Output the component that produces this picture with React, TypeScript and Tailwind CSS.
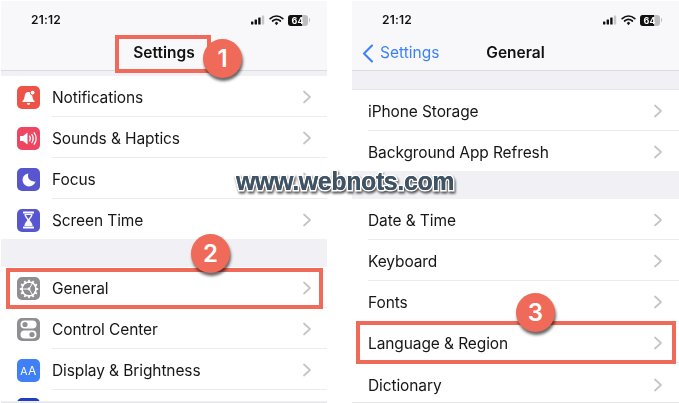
import React from "react";

function Chevron() {
  return (
    <svg width="10" height="14" viewBox="0 0 10 14" className="shrink-0">
      <path d="M2 1.5 L8 7 L2 12.5" fill="none" stroke="#c4c4c7" strokeWidth="1.7" strokeLinecap="round" strokeLinejoin="round" />
    </svg>
  );
}

function StatusBar({ pad }: { pad: string }) {
  return (
    <div className={`flex items-center justify-between h-[36px] pt-[2px] ${pad}`}>
      <span className="text-[12px] font-semibold text-[#111] tracking-[0.2px]">21:12</span>
      <div className="flex items-center gap-[4px]">
        <svg width="14" height="10" viewBox="0 0 14 10">
          <rect x="0" y="6.5" width="2.4" height="3" rx=".5" fill="#111" />
          <rect x="3.6" y="4.5" width="2.4" height="5" rx=".5" fill="#111" />
          <rect x="7.2" y="2.5" width="2.4" height="7" rx=".5" fill="#111" />
          <rect x="10.8" y="0.5" width="2.4" height="9" rx=".5" fill="#c8c8c8" />
        </svg>
        <svg width="15" height="11" viewBox="0 0 15 11">
          <path d="M1.2 3.6 C5 .3 10 .3 13.8 3.6" fill="none" stroke="#111" strokeWidth="1.7" strokeLinecap="round" />
          <path d="M3.6 6 C6 4 9 4 11.4 6" fill="none" stroke="#111" strokeWidth="1.7" strokeLinecap="round" />
          <path d="M5.7 8.1 L7.5 6.8 L9.3 8.1 L7.5 10.2 Z" fill="#111" />
        </svg>
        <div className="flex items-center">
          <div className="relative w-[20px] h-[11px] rounded-[3px] bg-[#bdbdbd] overflow-hidden">
            <div className="w-[14px] h-[11px] bg-[#111]" />
            <span className="absolute inset-0 flex items-center justify-center text-[9px] font-bold leading-none text-white">64</span>
          </div>
          <div className="w-[1.5px] h-[4px] ml-[1px] bg-[#bdbdbd] rounded-r-sm" />
        </div>
      </div>
    </div>
  );
}

function IconBox({ bg, children }: { bg: string; children?: React.ReactNode }) {
  return (
    <div className={`w-[23px] h-[23px] rounded-[5px] flex items-center justify-center shrink-0 ${bg}`}>{children}</div>
  );
}

function Row({ label, icon, last, h = "h-[41px]", pr = "pr-[16px]" }: { label: string; icon?: React.ReactNode; last?: boolean; h?: string; pr?: string }) {
  return (
    <div className={`flex items-center shrink-0 ${h} bg-white pl-[16px] pt-[2px]`}>
      {icon && <div className="mr-[12px]">{icon}</div>}
      <div className={`flex-1 flex items-center justify-between self-stretch ${pr} ${last ? "" : "border-b border-[#ececee]"}`}>
        <span className="text-[15.5px] text-[#161616] tracking-[-0.1px] pt-[2px]">{label}</span>
        <Chevron />
      </div>
    </div>
  );
}

const Bell = (
  <svg width="17" height="17" viewBox="0 0 17 17">
    <path d="M8.5 3 C5.8 3 4.8 5 4.6 7.5 C4.4 9.8 3.6 11 2.4 12.2 L2.4 13 L14.6 13 L14.6 12.2 C13.4 11 12.6 9.8 12.4 7.5 C12.2 5 11.2 3 8.5 3 Z" fill="#fff" />
    <circle cx="12.6" cy="3.6" r="2.4" fill="#fff" stroke="#ee5347" strokeWidth="1" />
    <path d="M6.8 14 H10.2 C10 15.3 9.3 15.8 8.5 15.8 C7.7 15.8 7 15.3 6.8 14 Z" fill="#fff" />
  </svg>
);
const Speaker = (
  <svg width="19" height="15" viewBox="0 0 19 15">
    <path d="M1 5 H4 L8.5 1.5 V13.5 L4 10 H1 Z" fill="#fff" />
    <path d="M10.5 5.2 C11.5 6.5 11.5 8.5 10.5 9.8 M12.8 3.4 C14.6 5.6 14.6 9.4 12.8 11.6 M15.2 1.8 C17.8 5 17.8 10 15.2 13.2" fill="none" stroke="#fff" strokeWidth="1.3" strokeLinecap="round" />
  </svg>
);
const Moon = (
  <svg width="16" height="16" viewBox="0 0 16 16">
    <path d="M7.4 1.6 C5.9 5.6 8.6 10 14.6 9.6 C13.6 12.6 11 14.4 8 14.4 C4.4 14.4 1.6 11.6 1.6 8 C1.6 4.8 4 2 7.4 1.6 Z" fill="#fff" />
  </svg>
);
const Hourglass = (
  <svg width="13" height="18" viewBox="0 0 13 18">
    <rect x="1" y="0.5" width="11" height="2" rx=".6" fill="#fff" />
    <rect x="1" y="15.5" width="11" height="2" rx=".6" fill="#fff" />
    <path d="M2.4 3 H10.6 C10.6 5.8 8.4 7.4 7.6 9 C8.4 10.6 10.6 12.2 10.6 15 H2.4 C2.4 12.2 4.6 10.6 5.4 9 C4.6 7.4 2.4 5.8 2.4 3 Z" fill="#fff" opacity=".95" />
    <path d="M4 4 H9 C8.8 5.6 7.4 6.6 6.5 8 C5.6 6.6 4.2 5.6 4 4 Z" fill="#5856cf" />
  </svg>
);
const teeth = [0, 30, 60, 90, 120, 150, 180, 210, 240, 270, 300, 330];
const Gear = (
  <svg width="20" height="20" viewBox="0 0 20 20">
    {teeth.map((a) => (
      <rect key={a} x="9.1" y="0.8" width="1.8" height="3" fill="#fff" transform={`rotate(${a} 10 10)`} />
    ))}
    <circle cx="10" cy="10" r="7" fill="none" stroke="#fff" strokeWidth="1.6" />
    <circle cx="10" cy="10" r="1.4" fill="#fff" />
    <path d="M10 10 L4.2 10 M10 10 L13.2 4.8 M10 10 L13.2 15.2" stroke="#fff" strokeWidth="1" />
  </svg>
);
const Toggles = (
  <svg width="17" height="19" viewBox="0 0 17 19">
    <rect x="0.5" y="0.5" width="16" height="8" rx="4" fill="#fff" />
    <circle cx="5" cy="4.5" r="2.6" fill="#8e8e93" />
    <rect x="0.5" y="10.5" width="16" height="8" rx="4" fill="#fff" />
    <circle cx="12" cy="14.5" r="2.6" fill="#8e8e93" />
  </svg>
);

function Badge({ n, pos }: { n: string; pos: string }) {
  return (
    <div className={`absolute ${pos} w-[39px] h-[39px] rounded-full bg-[#ef6a58] flex items-center justify-center text-white text-[24px] font-semibold shadow-[1px_3px_3px_rgba(0,0,0,0.6)]`}>
      {n}
    </div>
  );
}

function Outline({ pos }: { pos: string }) {
  return <div className={`absolute ${pos} border-[4px] border-[#ef6a58]`} />;
}

export default function App() {
  return (
    <div
      className="relative w-[679px] h-[403px] bg-white overflow-hidden flex pt-px"
      style={{ fontFamily: '"Inter", "Liberation Sans", sans-serif' }}
    >
      <div className="w-[326px] ml-px flex flex-col h-[402px] bg-[#f1f1f5] overflow-hidden border-b border-[#e6e6e9] [filter:blur(0.35px)]">
        <div className="bg-[#f8f8fa] h-[70px] border-b border-[#dcdcdf] shrink-0">
          <StatusBar pad="pl-[30px] pr-[17px]" />
          <div className="text-center text-[15.5px] font-semibold text-[#111] leading-[32px]">Settings</div>
        </div>
        <div className="h-[5px] shrink-0" />
        <Row pr="pr-[15px]" label="Notifications" icon={<IconBox bg="bg-[#ee5347]">{Bell}</IconBox>} />
        <Row pr="pr-[15px]" label="Sounds & Haptics" icon={<IconBox bg="bg-[#ee4560]">{Speaker}</IconBox>} />
        <Row pr="pr-[15px]" label="Focus" icon={<IconBox bg="bg-[#5856cf]">{Moon}</IconBox>} />
        <Row pr="pr-[15px]" label="Screen Time" last h="h-[40px]" icon={<IconBox bg="bg-[#5856cf]">{Hourglass}</IconBox>} />
        <div className="h-[28px] shrink-0" />
        <Row pr="pr-[15px]" label="General" icon={<IconBox bg="bg-[#8e8e93]">{Gear}</IconBox>} />
        <Row pr="pr-[15px]" label="Control Center" icon={<IconBox bg="bg-[#8e8e93]">{Toggles}</IconBox>} />
        <Row
          pr="pr-[15px]"
          label="Display & Brightness"
          icon={
            <IconBox bg="bg-[#3f80f6]">
              <span className="text-white text-[12px] tracking-[0.5px]">
                <span className="text-[10.5px]">A</span>A
              </span>
            </IconBox>
          }
        />
        <div className="bg-white h-[11px] pl-[16px] pt-[8px] shrink-0 overflow-hidden">
          <div className="w-[23px] h-[23px] rounded-[5px] bg-[#1d3fc4]" />
        </div>
      </div>

      <div className="w-[327px] ml-[25px] flex flex-col h-[402px] bg-[#f1f1f5] overflow-hidden border-b border-[#e6e6e9] [filter:blur(0.35px)]">
        <div className="bg-[#f8f8fa] h-[70px] border-b border-[#dcdcdf] shrink-0">
          <StatusBar pad="pl-[30px] pr-[17px]" />
          <div className="relative flex items-center justify-center h-[32px]">
            <div className="absolute left-[10px] top-0 h-[32px] flex items-center gap-[6px]">
              <svg width="12" height="19" viewBox="0 0 12 19">
                <path d="M10 1.5 L2 9.5 L10 17.5" fill="none" stroke="#3b82f6" strokeWidth="2.1" strokeLinecap="round" strokeLinejoin="round" />
              </svg>
              <span className="text-[15.5px] text-[#3b82f6]">Settings</span>
            </div>
            <span className="text-[15.5px] font-semibold text-[#111]">General</span>
          </div>
        </div>
        <div className="h-[19px] shrink-0 border-b border-[#e6e6e9]" />
        <Row label="iPhone Storage" />
        <Row label="Background App Refresh" last h="h-[40px]" />
        <div className="h-[28px] shrink-0" />
        <Row label="Date & Time" />
        <Row label="Keyboard" />
        <Row label="Fonts" />
        <Row label="Language & Region" />
        <Row label="Dictionary" last />
      </div>

      <Outline pos="left-[115px] top-[35px] w-[96px] h-[38px]" />
      <Outline pos="left-[6px] top-[268px] w-[317px] h-[41px]" />
      <Outline pos="left-[356px] top-[321px] w-[320px] h-[43px]" />
      <Badge n="1" pos="left-[203px] top-[39px]" />
      <Badge n="2" pos="left-[191px] top-[234px]" />
      <Badge n="3" pos="left-[516px] top-[293px]" />

      <div
        className="absolute left-[236px] top-[166px] text-[25px] font-bold leading-[30px] text-[#3f5364] tracking-[-0.4px] [-webkit-text-stroke:3px_#ffffff] [paint-order:stroke_fill] [text-shadow:0_0_0.6px_#3f5364] [filter:drop-shadow(1px_2px_1px_rgba(30,30,30,0.75))]"
        style={{ fontFamily: '"Liberation Sans", sans-serif' }}
      >
        www.webnots.com
      </div>
    </div>
  );
}
